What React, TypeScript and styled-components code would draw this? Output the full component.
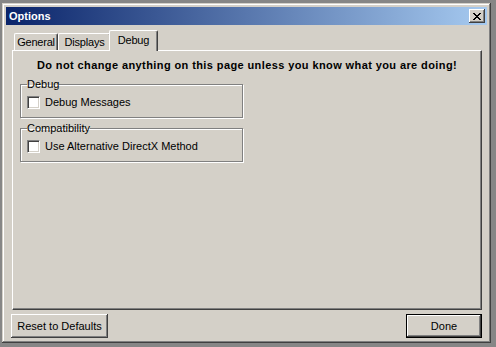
import React from 'react';
import styled, { createGlobalStyle } from 'styled-components';

const GlobalStyle = createGlobalStyle`
  html, body {
    margin: 0;
    padding: 0;
    background: #868686;
    font-family: "Liberation Sans", Arial, sans-serif;
    font-size: 11px;
    color: #000;
  }
`

const face = '#d4d0c8'

const Window = styled.div`
  box-sizing: border-box;
  margin: 3px 0 0 2px;
  width: 489px;
  height: 340px;
  padding: 4px;
  background: ${face};
  display: flex;
  flex-direction: column;
  box-shadow:
    inset -1px -1px #404040,
    inset 1px 1px ${face},
    inset -2px -2px #808080,
    inset 2px 2px #fff;
`

const TitleBar = styled.div`
  height: 18px;
  display: flex;
  align-items: center;
  justify-content: space-between;
  padding: 0 2px 0 3px;
  background: linear-gradient(to right, #0a246a, #a6caf0);
  color: #fff;
  font-weight: bold;
`

const CloseButton = styled.div`
  width: 16px;
  height: 14px;
  box-sizing: border-box;
  background: ${face};
  display: flex;
  align-items: center;
  justify-content: center;
  box-shadow:
    inset -1px -1px #404040,
    inset 1px 1px #fff,
    inset -2px -2px #808080;
`

const Body = styled.div`
  flex: 1;
  display: flex;
  flex-direction: column;
  padding: 5px 5px 0 6px;
`

const TabRow = styled.div`
  height: 20px;
  display: flex;
  align-items: flex-end;
  padding-left: 2px;
  position: relative;
  z-index: 1;
`

const Tab = styled.div<{ $active?: boolean; $w: number }>`
  box-sizing: border-box;
  width: ${p => p.$w}px;
  height: ${p => (p.$active ? '21px' : '17px')};
  margin: ${p => (p.$active ? '0 -2px -1px -2px' : '0')};
  padding-top: ${p => (p.$active ? '2px' : '1px')};
  text-align: center;
  background: ${face};
  border-top: 1px solid #fff;
  border-left: 1px solid #fff;
  border-right: 1px solid #404040;
  border-top-left-radius: 2px;
  border-top-right-radius: 2px;
  box-shadow: inset -1px 0 #808080;
  white-space: nowrap;
  line-height: 14px;
  letter-spacing: -0.2px;
`

const Panel = styled.div`
  box-sizing: border-box;
  height: 260px;
  background: ${face};
  padding: 7px 7px;
  display: flex;
  flex-direction: column;
  border-top: 1px solid #fff;
  border-left: 1px solid #fff;
  border-right: 1px solid #404040;
  border-bottom: 1px solid #404040;
  box-shadow: inset -1px -1px #808080;
`

const Warning = styled.div`
  text-align: center;
  font-weight: bold;
  height: 14px;
  line-height: 14px;
  letter-spacing: 0.4px;
  margin-bottom: 6px;
`

const GroupBox = styled.fieldset`
  box-sizing: border-box;
  width: 223px;
  height: 40px;
  margin: 0 0 4px 0;
  padding: 5px 6px 0 6px;
  border: 1px solid #808080;
  box-shadow: 1px 1px #fff, inset 1px 1px #fff;
  min-width: 0;
`

const Legend = styled.legend`
  padding: 0;
  margin-left: 0;
  line-height: 12px;
`

const CheckRow = styled.label`
  display: flex;
  align-items: center;
  gap: 5px;
  height: 14px;
`

const CheckBox = styled.span`
  box-sizing: border-box;
  width: 13px;
  height: 13px;
  background: #fff;
  border-top: 1px solid #808080;
  border-left: 1px solid #808080;
  border-right: 1px solid #fff;
  border-bottom: 1px solid #fff;
  box-shadow: inset 1px 1px #404040, inset -1px -1px ${face};
`

const ButtonRow = styled.div`
  display: flex;
  justify-content: space-between;
  margin-top: 4px;
  margin-left: -1px;
`

const Button = styled.button<{ $default?: boolean; $w: number }>`
  box-sizing: border-box;
  width: ${p => p.$w}px;
  height: 24px;
  padding: 0;
  font: inherit;
  color: #000;
  background: ${face};
  border: ${p => (p.$default ? '1px solid #000' : 'none')};
  box-shadow: inset -1px -1px #404040, inset 1px 1px #fff, inset -2px -2px #808080;
`

const CloseGlyph = () => (
  <svg width="8" height="7" viewBox="0 0 8 7" shapeRendering="crispEdges">
    <path d="M0 0h2v1h-2zM6 0h2v1h-2zM1 1h2v1h-2zM5 1h2v1h-2zM2 2h4v1h-4zM3 3h2v1h-2zM2 4h4v1h-4zM1 5h2v1h-2zM5 5h2v1h-2zM0 6h2v1h-2zM6 6h2v1h-2z" fill="#000" />
  </svg>
)

export default function App() {
  return (
    <>
      <GlobalStyle />
      <Window>
        <TitleBar>
          <span>Options</span>
          <CloseButton><CloseGlyph /></CloseButton>
        </TitleBar>
        <Body>
          <TabRow>
            <Tab $w={44}>General</Tab>
            <Tab $w={53}>Displays</Tab>
            <Tab $w={49} $active>Debug</Tab>
          </TabRow>
          <Panel>
            <Warning>Do not change anything on this page unless you know what you are doing!</Warning>
            <GroupBox>
              <Legend>Debug</Legend>
              <CheckRow><CheckBox />Debug Messages</CheckRow>
            </GroupBox>
            <GroupBox>
              <Legend>Compatibility</Legend>
              <CheckRow><CheckBox />Use Alternative DirectX Method</CheckRow>
            </GroupBox>
          </Panel>
          <ButtonRow>
            <Button $w={97}>Reset to Defaults</Button>
            <Button $w={76} $default>Done</Button>
          </ButtonRow>
        </Body>
      </Window>
    </>
  )
}
